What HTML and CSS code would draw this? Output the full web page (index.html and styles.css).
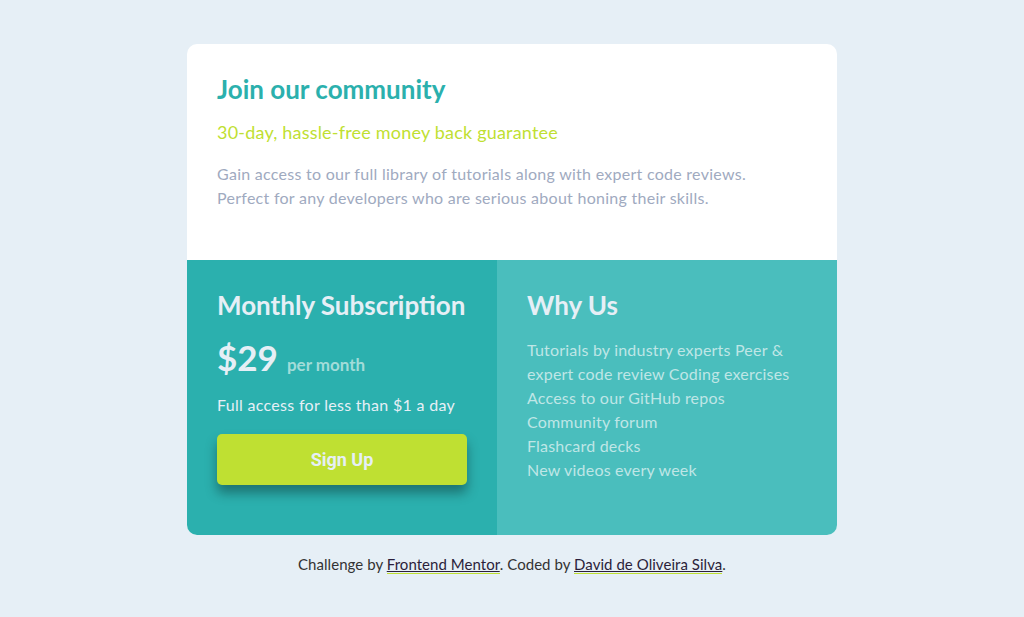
FILE: index.html
```html
<!DOCTYPE html>
<html lang="en">
<head>
<meta charset="utf-8">
<title>Single price grid</title>
<link rel="stylesheet" href="styles.css">
</head>
<body>
<main class="card">
  <section class="intro">
    <h1 class="intro-title">Join our community</h1>
    <p class="intro-sub">30-day, hassle-free money back guarantee</p>
    <p class="intro-text">Gain access to our full library of tutorials along with expert code reviews.<br>Perfect for any developers who are serious about honing their skills.</p>
  </section>
  <div class="bottom">
    <section class="sub">
      <h2 class="panel-title">Monthly Subscription</h2>
      <div class="price"><span class="price-amount">$29</span><span class="price-per">per month</span></div>
      <p class="sub-text">Full access for less than $1 a day</p>
      <button class="signup">Sign Up</button>
    </section>
    <section class="why">
      <h2 class="panel-title">Why Us</h2>
      <ul class="why-list">
        <li>Tutorials by industry experts Peer &amp; expert code review Coding exercises</li>
        <li>Access to our GitHub repos</li>
        <li>Community forum</li>
        <li>Flashcard decks</li>
        <li>New videos every week</li>
      </ul>
    </section>
  </div>
</main>
<footer class="attribution">Challenge by <a href="#">Frontend Mentor</a>. Coded by <a href="#">David de Oliveira Silva</a>.</footer>
</body>
</html>
```
FILE: styles.css
```css
* { box-sizing: border-box; }
html, body { margin: 0; padding: 0; }
body {
  background: #e6eff6;
  font-family: "Lato", "Open Sans", sans-serif;
  font-size: 16px;
  display: flex;
  flex-direction: column;
  align-items: center;
  min-height: 617px;
}
.card {
  margin-top: 44px;
  width: 650px;
  background: #fff;
  border-radius: 10px;
  overflow: hidden;
}
.intro { padding: 30px 30px 50px; }
.intro-title {
  margin: 0;
  font-size: 26px;
  line-height: 30px;
  font-weight: 700;
  color: #2bb0ad;
}
.intro-sub {
  margin: 16px 0 0;
  font-size: 18px;
  line-height: 24px;
  letter-spacing: 0.2px;
  color: #bfdf32;
}
.intro-text {
  margin: 18px 0 0;
  font-size: 16px;
  line-height: 24px;
  letter-spacing: 0.27px;
  color: #a0aabf;
}
.bottom {
  display: grid;
  grid-template-columns: 310px 340px;
}
.sub {
  background: #2bb0ae;
  padding: 30px 30px 50px;
  color: #e6eff6;
}
.why {
  background: #4abebd;
  padding: 30px;
  color: #e6eff6;
}
.panel-title {
  margin: 0;
  font-size: 26px;
  line-height: 30px;
  font-weight: 700;
  color: #e6eff6;
}
.price {
  margin-top: 17px;
  display: flex;
  align-items: baseline;
  gap: 9px;
}
.price-amount {
  font-size: 35px;
  line-height: 40px;
  font-weight: 700;
}
.price-per {
  font-size: 17px;
  font-weight: 700;
  color: #a2dcd9;
}
.sub-text {
  margin: 16px 0 0;
  font-size: 16px;
  line-height: 24px;
  letter-spacing: 0.3px;
}
.signup {
  margin-top: 17px;
  display: block;
  width: 250px;
  height: 51px;
  border: 0;
  border-radius: 5px;
  background: #bfe032;
  color: #e6eff6;
  font-family: "Roboto", "Liberation Sans", sans-serif;
  font-weight: 700;
  font-size: 18px;
  box-shadow: 0 8px 12px rgba(0, 0, 0, 0.35);
  cursor: pointer;
}
.why-list {
  list-style: none;
  margin: 18px 0 0;
  padding: 0;
  font-size: 16px;
  line-height: 24px;
  letter-spacing: 0.2px;
  color: #bfe6e6;
}
.attribution {
  margin-top: 19px;
  font-size: 15px;
  line-height: 20px;
  letter-spacing: 0.05px;
  color: #333;
}
.attribution a {
  color: #2b1e3a;
  text-decoration: underline;
  border-bottom: 1px solid #bfdf32;
}
```
